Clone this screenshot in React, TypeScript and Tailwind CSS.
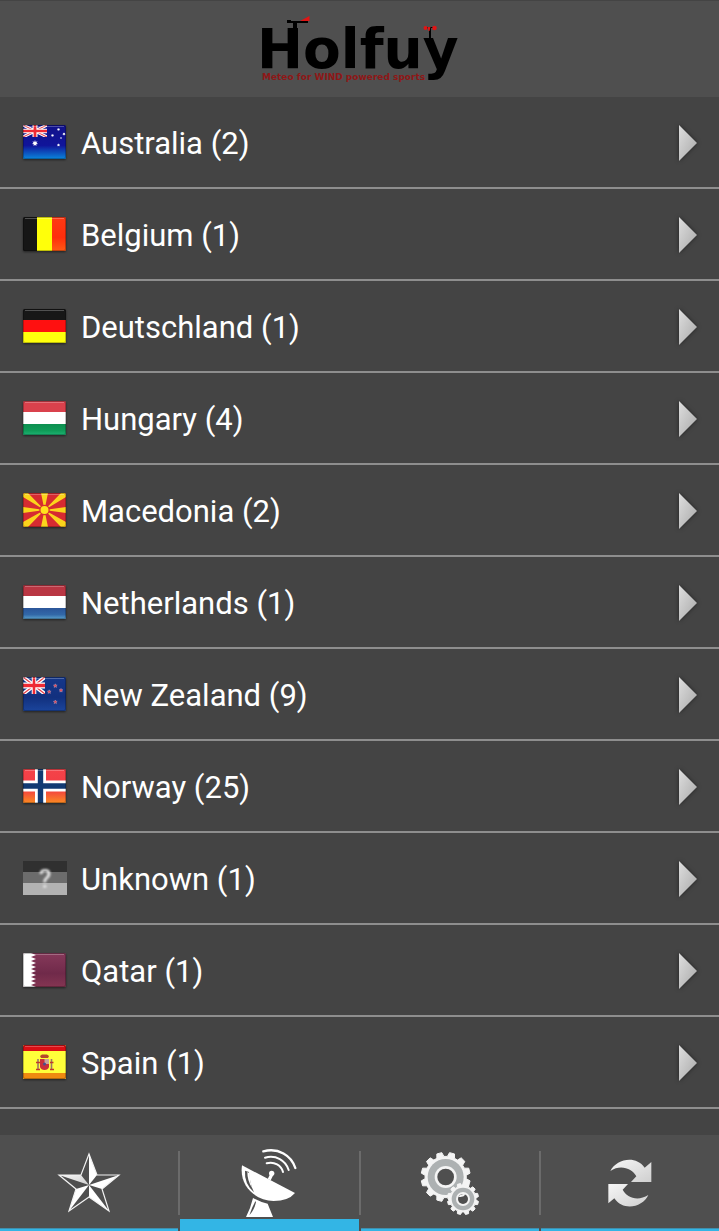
import { Fragment, useState, type ReactNode } from "react";
import clsx from "clsx";

type Point = [number, number];

function starPoints(cx: number, cy: number, r: number, tips: number) {
  const out: string[] = [];
  for (let i = 0; i < tips * 2; i++) {
    const a = (Math.PI * i) / tips - Math.PI / 2;
    const d = i % 2 === 0 ? r : r * 0.48;
    out.push(`${(cx + d * Math.cos(a)).toFixed(2)},${(cy + d * Math.sin(a)).toFixed(2)}`);
  }
  return out.join(" ");
}

function gearPoints(cx: number, cy: number, outer: number, root: number, teeth: number) {
  const step = 360 / teeth;
  const out: string[] = [];
  for (let i = 0; i < teeth; i++) {
    const mid = i * step + step / 2;
    const corners: Point[] = [
      [-0.34, root],
      [-0.2, outer],
      [0.2, outer],
      [0.34, root],
    ];
    corners.forEach(([offset, r]) => {
      const a = ((mid + offset * step - 90) * Math.PI) / 180;
      out.push(`${(cx + r * Math.cos(a)).toFixed(1)},${(cy + r * Math.sin(a)).toFixed(1)}`);
    });
  }
  return out.join(" ");
}

function UnionJack({ w, h, blue }: { w: number; h: number; blue: string }) {
  return (
    <svg x="0" y="0" width={w} height={h} viewBox="0 0 24 14" preserveAspectRatio="none">
      <rect width="24" height="14" fill={blue} />
      <path d="M0 0L24 14M24 0L0 14" stroke="#fff" strokeWidth="3.4" />
      <path d="M0 0L24 14M24 0L0 14" stroke="#e8404a" strokeWidth="1.2" />
      <path d="M12 0V14M0 7H24" stroke="#fff" strokeWidth="5" />
      <path d="M12 0V14M0 7H24" stroke="#ee2a35" strokeWidth="2.8" />
    </svg>
  );
}

const stripes = (a: string, b: string, c: string) => (
  <>
    <rect width="43" height="12" fill={a} />
    <rect y="11" width="43" height="12" fill={b} />
    <rect y="23" width="43" height="11" fill={c} />
  </>
);

const flags: Record<string, ReactNode> = {
  au: (
    <>
      <rect width="43" height="34" fill="url(#auBlue)" />
      <UnionJack w={24} h={12} blue="#14148c" />
      <polygon points={starPoints(12, 18.3, 3.2, 7)} fill="#fff" />
      <polygon points={starPoints(35.5, 4.5, 1.7, 7)} fill="#fff" />
      <polygon points={starPoints(29.5, 10.5, 1.7, 7)} fill="#fff" />
      <polygon points={starPoints(41, 9, 1.7, 7)} fill="#fff" />
      <polygon points={starPoints(35.5, 20, 1.7, 7)} fill="#fff" />
      <circle cx="38" cy="13" r="0.8" fill="#fff" />
    </>
  ),
  be: (
    <>
      <rect width="15" height="34" fill="#161616" />
      <rect x="14" width="15" height="34" fill="#ffff0a" />
      <rect x="29" width="14" height="34" fill="url(#beRed)" />
    </>
  ),
  de: stripes("#171717", "#ff1010", "#ffff0c"),
  hu: stripes("#d9414c", "#ffffff", "url(#huGreen)"),
  mk: (
    <>
      <rect width="43" height="34" fill="#d62b31" />
      <path
        d="M18 0H25L21.5 17ZM18 34H25L21.5 17ZM0 14V20L21.5 17ZM43 14V20L21.5 17ZM0 1V4L21.5 17L5 0H1ZM43 1V4L21.5 17L38 0H42ZM0 33V29L21.5 17L5 34H1ZM43 33V29L21.5 17L38 34H42Z"
        fill="#fbd41c"
      />
      <circle cx="21.5" cy="17" r="5.2" fill="#d62b31" />
      <circle cx="21.5" cy="17" r="4" fill="#ffe01c" />
    </>
  ),
  nl: stripes("#b93643", "#ffffff", "url(#nlBlue)"),
  nz: (
    <>
      <rect width="43" height="34" fill="url(#nzBlue)" />
      <UnionJack w={22} h={17} blue="#173a8c" />
      {(
        [
          [32.3, 8.8],
          [26.2, 14.8],
          [38, 13.4],
          [32.3, 25],
        ] as Point[]
      ).map(([x, y]) => (
        <polygon
          key={`${x}-${y}`}
          points={starPoints(x, y, 2, 5)}
          fill="#e8414e"
          stroke="#b79bb8"
          strokeWidth="0.5"
        />
      ))}
    </>
  ),
  no: (
    <>
      <rect width="43" height="34" fill="url(#noRed)" />
      <path d="M17.5 0V34M0 17H43" stroke="#fff" strokeWidth="11" />
      <path d="M17.5 0V34M0 17H43" stroke="#123a72" strokeWidth="5.4" />
    </>
  ),
  qa: (
    <>
      <rect width="43" height="34" fill="url(#qaMaroon)" />
      <path
        d="M0 0H8L13 2L8 4L13 6L8 8L13 10L8 12L13 14L8 16L13 18L8 20L13 22L8 24L13 26L8 28L13 30L8 32L13 34H0Z"
        fill="#fff"
      />
    </>
  ),
  es: (
    <>
      <rect width="43" height="34" fill="#ffff3a" />
      <rect width="43" height="6" fill="#d90f14" />
      <rect y="28" width="43" height="6" fill="#ef8a10" />
      <path d="M17 11L19 9.5H24L26 11L25 13H18Z" fill="#b5482a" />
      <path d="M17 14H26V22Q25 25 21.5 25T17 22Z" fill="#c9303a" />
      <path d="M21.5 14H26V19H21.5Z" fill="#c9a59a" />
      <circle cx="21.5" cy="19" r="1.5" fill="#4a4f8c" />
      <path d="M15 14V25M28.5 14V25" stroke="#9a7767" strokeWidth="1.6" />
      <path d="M13 17.5H17M27 17.5H30.5M13 24.5H17M27 24.5H31" stroke="#c0392b" strokeWidth="1.4" />
    </>
  ),
};

function Gradients() {
  const vertical: [string, string, string, string][] = [
    ["auBlue", "#12128a", "#10149a", "#0a86dc"],
    ["beRed", "#ff3a14", "#ff2e0c", "#ff5a14"],
    ["huGreen", "#0d8f50", "#0f9c58", "#1db173"],
    ["nlBlue", "#2b5599", "#3268a8", "#5aa0cc"],
    ["nzBlue", "#15378a", "#12307e", "#1b459c"],
    ["noRed", "#f4434a", "#f23c42", "#fb8a22"],
    ["qaMaroon", "#86395a", "#702a4a", "#843552"],
  ];
  return (
    <svg className="absolute size-0" aria-hidden="true">
      <defs>
        {vertical.map(([id, top, mid, bottom]) => (
          <linearGradient key={id} id={id} x1="0" y1="0" x2="0" y2="1">
            <stop offset="0" stopColor={top} />
            <stop offset="0.6" stopColor={mid} />
            <stop offset="1" stopColor={bottom} />
          </linearGradient>
        ))}
        <linearGradient id="arrow" x1="0" y1="0" x2="1" y2="1">
          <stop offset="0" stopColor="#dedede" />
          <stop offset="1" stopColor="#a8a8a8" />
        </linearGradient>
        <linearGradient id="silver" x1="0" y1="0" x2="1" y2="1">
          <stop offset="0" stopColor="#f6f6f6" />
          <stop offset="1" stopColor="#cfcfcf" />
        </linearGradient>
        <clipPath id="flagShape">
          <rect width="43" height="34" rx="1.5" />
        </clipPath>
      </defs>
    </svg>
  );
}

function Flag({ code }: { code: string }) {
  if (code === "unknown") {
    return (
      <svg viewBox="0 0 44 34" className="h-[34px] w-11 shrink-0" aria-hidden="true">
        <rect width="44" height="12" fill="#303030" />
        <rect y="11" width="44" height="12" fill="#6c6c6c" />
        <rect y="22" width="44" height="12" fill="#b2b2b2" />
        <text
          x="22"
          y="27"
          textAnchor="middle"
          fontSize="26"
          fill="#e2e2e2"
          className="font-[Roboto,sans-serif] font-medium blur-[1px]"
        >
          ?
        </text>
      </svg>
    );
  }
  return (
    <svg
      viewBox="0 0 43 34"
      className="h-[34px] w-[43px] shrink-0 drop-shadow-[0_1px_1px_rgba(0,0,0,0.5)]"
      aria-hidden="true"
    >
      <g clipPath="url(#flagShape)">
        {flags[code]}
        <path d="M2 1.5H41" stroke="#fff" strokeOpacity="0.25" />
        <rect x="0.5" y="0.5" width="42" height="33" rx="1.5" fill="none" stroke="#000" strokeOpacity="0.25" />
      </g>
    </svg>
  );
}

function Logo() {
  return (
    <svg
      viewBox="240 1 240 96"
      className="h-24 w-60"
      role="img"
      aria-label="Holfuy, Meteo for WIND powered sports"
    >
      <text x="257" y="68" fontSize="55" className="font-['DejaVu_Sans',sans-serif] font-bold">
        Holfuy
      </text>
      <path d="M287 20H291V21H308V23H297V28H293V23H287Z" fill="#000" />
      <path d="M300 21L309.5 16V21Z" fill="#e01515" />
      <path d="M429 28V38H431V28H436V27H425V29Z" fill="#000" />
      <circle cx="425.5" cy="28" r="2" fill="#e01515" />
      <circle cx="434.5" cy="28" r="2.3" fill="#e01515" />
      <path d="M427.5 27H430.5L429.5 31H428.5Z" fill="#e01515" />
      <text
        x="262"
        y="80"
        fontSize="9"
        fill="#8e1717"
        className="font-['DejaVu_Sans',sans-serif] font-bold"
      >
        Meteo for WIND powered sports
      </text>
    </svg>
  );
}

function StarIcon() {
  const tips: Point[] = [[88, 22], [118, 43], [108, 79], [68, 79], [58, 43]];
  const notches: Point[] = [[96, 43], [101, 57], [88, 65], [75, 57], [80, 43]];
  return (
    <svg viewBox="56 17 64 68" className="h-[68px] w-16" aria-hidden="true">
      {tips.map((tip, i) => (
        <polygon key={i} points={`88,53 ${tip} ${notches[i]}`} fill={i === 4 ? "url(#silver)" : "#fff"} />
      ))}
      <polygon
        points={tips.map((tip, i) => `${tip} ${notches[i]}`).join(" ")}
        fill="none"
        stroke="#f2f2f2"
        strokeWidth="1.2"
      />
    </svg>
  );
}

function DishIcon() {
  return (
    <svg viewBox="204 84 180 210" className="h-[70px] w-[60px]" aria-hidden="true">
      <path d="M213 136L372 219Q352 243 308 243C252 241 204 198 213 136Z" fill="#fff" />
      <path d="M222 152Q219 190 249 217Q236 190 234 156Z" fill="#4f4f4f" />
      <path d="M229 156Q229 182 243 204Q235 180 236 160Z" fill="#fff" />
      <path d="M246 234L272 246L290 251L306 291H225Q239 264 246 234Z" fill="#fff" />
      <path d="M253 244Q243 262 235 286Q250 270 255 246Z" fill="#4f4f4f" />
      <path d="M290 177L298 161L307 165L299 181Z" fill="#fff" />
      <circle cx="302" cy="160" r="8" fill="#fff" />
      <g fill="none" stroke="#fff" strokeLinecap="round">
        <path d="M277 94C322 82 361 106 373 144" strokeWidth="7" />
        <path d="M282 113C315 104 344 121 353 150" strokeWidth="6" />
        <path d="M287 130C310 124 331 136 336 156" strokeWidth="6" />
      </g>
    </svg>
  );
}

function GearsIcon() {
  return (
    <svg viewBox="173 86 186 204" className="h-[68px] w-[62px]" aria-hidden="true">
      <g stroke="#f4f4f4" strokeWidth="3" strokeLinejoin="round" fill="#f4f4f4">
        <polygon points={gearPoints(253, 170, 74, 62, 12)} />
      </g>
      <circle cx="253" cy="170" r="54" fill="#adb1b2" />
      <circle cx="253" cy="170" r="33" fill="#f4f4f4" />
      <circle cx="253" cy="170" r="25" fill="#4f4f4f" />
      <g stroke="#f4f4f4" strokeWidth="3" strokeLinejoin="round" fill="#f4f4f4">
        <polygon points={gearPoints(305, 236, 47, 39, 12)} />
      </g>
      <circle cx="305" cy="236" r="34" fill="#adb1b2" />
      <circle cx="305" cy="236" r="21" fill="#f4f4f4" />
      <circle cx="305" cy="236" r="15" fill="#4f4f4f" />
      <path d="M291 229Q299 218 313 222Q307 232 291 229Z" fill="#f4f4f4" />
    </svg>
  );
}

function RefreshIcon() {
  return (
    <svg viewBox="230 114 138 144" className="h-12 w-[46px]" aria-hidden="true">
      <path d="M240 150C258 114 316 101 343 140L363 123V183H302L318 166C306 143 271 129 240 150Z" fill="url(#silver)" />
      <path d="M234 189H293L277 206C289 229 321 243 354 222C338 258 280 273 252 232L234 247Z" fill="url(#silver)" />
    </svg>
  );
}

const countries = [
  { code: "au", name: "Australia", stations: 2 },
  { code: "be", name: "Belgium", stations: 1 },
  { code: "de", name: "Deutschland", stations: 1 },
  { code: "hu", name: "Hungary", stations: 4 },
  { code: "mk", name: "Macedonia", stations: 2 },
  { code: "nl", name: "Netherlands", stations: 1 },
  { code: "nz", name: "New Zealand", stations: 9 },
  { code: "no", name: "Norway", stations: 25 },
  { code: "unknown", name: "Unknown", stations: 1 },
  { code: "qa", name: "Qatar", stations: 1 },
  { code: "es", name: "Spain", stations: 1 },
];

const tabs = [
  { id: "favourites", label: "Favourites", icon: <StarIcon /> },
  { id: "stations", label: "Stations", icon: <DishIcon /> },
  { id: "settings", label: "Settings", icon: <GearsIcon /> },
  { id: "refresh", label: "Refresh", icon: <RefreshIcon /> },
];

export default function App() {
  const [active, setActive] = useState("stations");

  return (
    <div className="flex min-h-screen flex-col bg-[#444444] font-[Roboto,sans-serif] text-white">
      <Gradients />
      <header className="flex justify-center border-t border-[#444444] bg-[#4f4f4f]">
        <Logo />
      </header>

      <main className="flex-1">
        <ul>
          {countries.map((country) => (
            <li key={country.code} className="border-b-2 border-[#8e8e8e]">
              <button type="button" className="flex h-[90px] w-full items-center pr-[22px] pl-[23px] text-left">
                <span className="flex w-[58px] shrink-0">
                  <Flag code={country.code} />
                </span>
                <span className="flex-1 pt-1 text-[31px] leading-10">
                  {country.name} ({country.stations})
                </span>
                <svg
                  viewBox="0 -2 18 38"
                  className="h-[38px] w-[18px] shrink-0 drop-shadow-[0_0_2px_rgba(0,0,0,0.5)]"
                  aria-hidden="true"
                >
                  <path d="M0 0L18 18L0 36Z" fill="url(#arrow)" />
                </svg>
              </button>
            </li>
          ))}
        </ul>
      </main>

      <nav aria-label="Main" className="flex h-24 items-center bg-[#4f4f4f]">
        {tabs.map((tab, i) => (
          <Fragment key={tab.id}>
            {i > 0 && <span className="h-16 w-0.5 shrink-0 bg-[#6b6b6b]" />}
            <button
              type="button"
              aria-label={tab.label}
              aria-pressed={active === tab.id}
              onClick={() => setActive(tab.id)}
              className="relative flex h-full flex-1 items-center justify-center"
            >
              {tab.icon}
              <span
                className={clsx(
                  "absolute inset-x-0 bottom-0 bg-[#33b5e5]",
                  active === tab.id ? "h-3" : "h-[3px] border-t border-[#3f8fae]",
                )}
              />
            </button>
          </Fragment>
        ))}
      </nav>
    </div>
  );
}
